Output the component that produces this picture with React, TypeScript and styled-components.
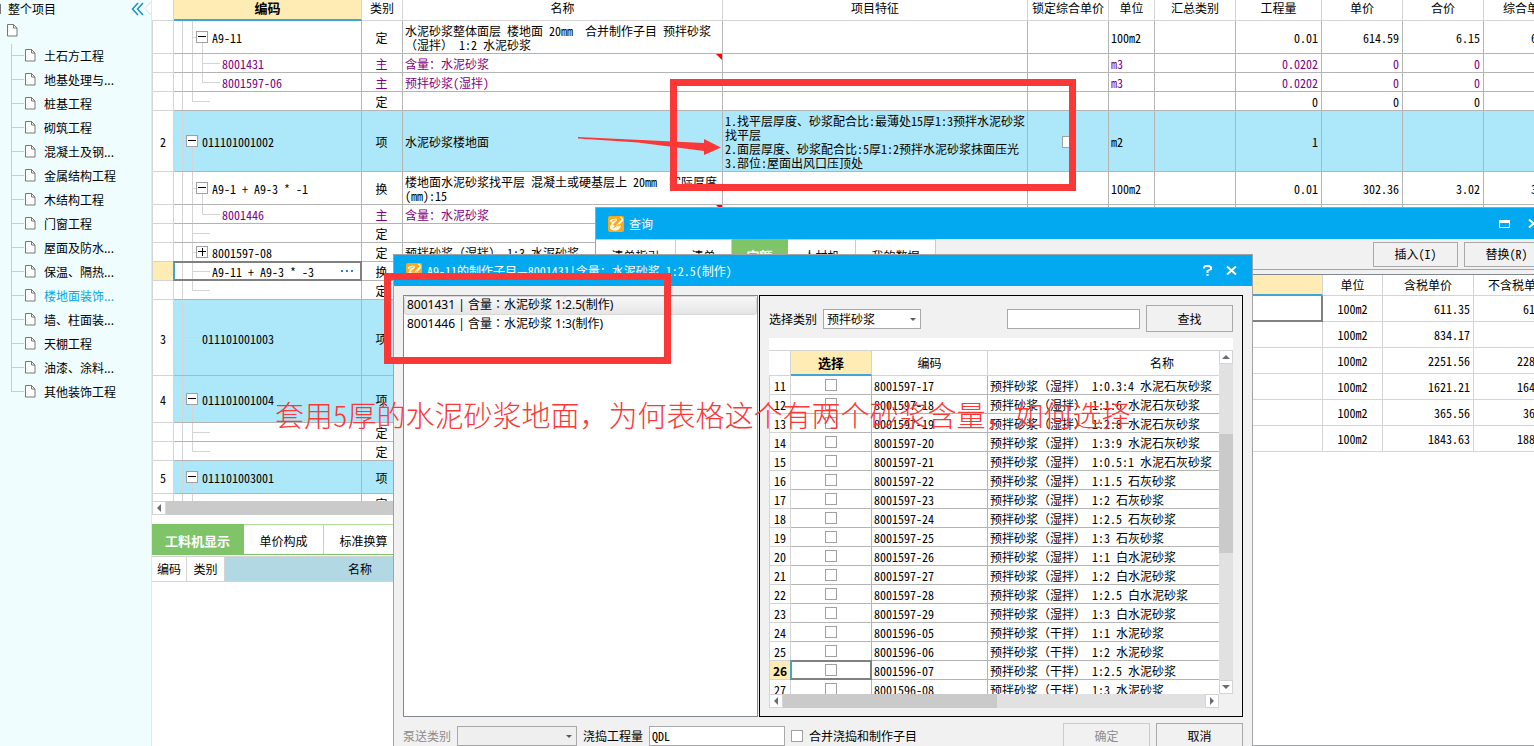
import React from "react";
import styled, { createGlobalStyle, css } from "styled-components";

const c = {
  line: "#b4b4b4",
  soft: "#d4d4d4",
  blue: "#02a9f1",
  row: "#ade8fa",
  head: "#ffecb4",
  accent: "#3fa5d3",
  green: "#80c46a",
  pale: "#b4e09c",
  panel: "#f1f1f1",
  purple: "#800080",
  red: "#fb3838",
};

const Global = createGlobalStyle`
  *, *::before, *::after { box-sizing: border-box; }
  html, body { margin: 0; padding: 0; background: #fff; }
  body, button, input, select {
    font-family: "Noto Sans CJK SC", "Liberation Sans", sans-serif;
    font-size: 12px;
    line-height: 14px;
    color: #000;
  }
  body { text-spacing-trim: space-all; }
  button, input, select { margin: 0; }
  table { border-collapse: separate; border-spacing: 0; table-layout: fixed; }
  td, th { padding: 0; font-weight: 400; }
`;

/* Latin letters and digits take half the width of an ideograph */
const mono = css`
  font-feature-settings: "hwid" 1;
`;

const FullWidth = styled.span`
  font-feature-settings: normal;
`;

/* keeps brackets and commas of the ideographic set at full width */
function wide(text?: string) {
  if (!text) return null;
  return text.split(/([（），])/).map((part, i) => (i % 2 ? <FullWidth key={i}>{part}</FullWidth> : part));
}

/* ---------- page frame ---------- */

const Page = styled.div`
  position: relative;
  display: flex;
  height: 100vh;
  overflow: hidden;
`;

const Sidebar = styled.nav`
  flex: 0 0 152px;
  background: #f0fdff;
  border-right: 1px solid #dcebee;
`;

const SideHead = styled.div`
  display: flex;
  align-items: center;
  height: 18px;
  gap: 5px;
`;

const SideMark = styled.span`
  width: 1px;
  height: 10px;
  background: #777;
`;

const SideTitle = styled.span`
  flex: 1;
  padding-left: 2px;
`;

const Collapse = styled.button`
  display: flex;
  border: 0;
  padding: 0;
  background: none;
`;

const RootRow = styled.div`
  display: flex;
  align-items: center;
  height: 26px;
  padding-left: 7px;
`;

const SideList = styled.ul`
  list-style: none;
  margin: 0;
  padding: 0 0 0 11px;
`;

const SideItem = styled.li`
  display: flex;
  height: 24px;
`;

const SideLink = styled.a<{ $active?: boolean }>`
  display: flex;
  align-items: center;
  gap: 8px;
  text-decoration: none;
  color: ${(p) => (p.$active ? "#0aa5e0" : "#000")};
`;

const Main = styled.main`
  flex: 1;
  min-width: 0;
  display: flex;
  flex-direction: column;
  ${mono}
`;

const GridArea = styled.div`
  flex: 1;
  min-height: 0;
  overflow: hidden;
`;

/* ---------- bill table ---------- */

const BillTable = styled.table`
  width: 1419px;
`;

const HeadCell = styled.th<{ $hot?: boolean }>`
  height: 21px;
  padding-bottom: 4px;
  text-align: center;
  white-space: nowrap;
  overflow: hidden;
  border-right: 1px solid ${c.soft};
  border-bottom: 1px solid ${c.soft};
  ${(p) =>
    p.$hot &&
    css`
      background: ${c.head};
      border-bottom: 2px solid ${c.accent};
      font-weight: 700;
      font-size: 13px;
    `}
`;

const BillRow = styled.tr<{ $h: number; $tone?: string }>`
  height: ${(p) => p.$h}px;
  color: ${(p) => (p.$tone === "sub" ? c.purple : "#000")};
  > td {
    height: ${(p) => p.$h}px;
    background: ${(p) => (p.$tone === "item" ? c.row : "#fff")};
  }
`;

const Cell = styled.td<{ $align?: string }>`
  position: relative;
  padding: 2px 3px 0 2px;
  text-align: ${(p) => p.$align ?? "left"};
  vertical-align: middle;
  white-space: pre;
  overflow: hidden;
  border-right: 1px solid ${c.line};
  border-bottom: 1px solid ${c.line};
`;

const NumCell = styled(Cell)<{ $hot?: boolean }>`
  && {
    background: ${(p) => (p.$hot ? c.head : "#fff")};
  }
  border-color: ${c.soft};
  border-left: 1px solid ${c.soft};
  text-align: center;
  padding: 2px 0 0;
`;

const CodeCell = styled(Cell)<{ $picked?: boolean }>`
  padding: 0;
  ${(p) =>
    p.$picked &&
    css`
      overflow: visible;
      &::after {
        content: "";
        position: absolute;
        inset: -1px;
        border: 2px solid #808080;
        border-left-color: ${c.accent};
        pointer-events: none;
      }
    `}
`;

const CodeInner = styled.div`
  display: flex;
  align-items: center;
`;

const CodeText = styled.span`
  flex: 1;
  padding-top: 2px;
`;

const More = styled.button`
  border: 0;
  background: none;
  display: flex;
  padding: 0 8px;
`;

const Note = styled.span`
  position: absolute;
  top: 0;
  right: 0;
  border-top: 6px solid #f00;
  border-left: 6px solid transparent;
`;

const Tick = styled.input.attrs({ type: "checkbox" })`
  appearance: none;
  display: block;
  margin: 0 auto;
  width: 12px;
  height: 12px;
  border: 1px solid #a0a0a0;
  background: #fff;
`;

type Level = 1 | 2 | 3;
type Mark = "minus" | "plus" | null;

interface Bill {
  h: number;
  num?: string;
  code?: string;
  level: Level;
  mark?: Mark;
  last?: boolean;
  kind?: string;
  name?: string;
  feature?: string;
  unit?: string;
  qty?: string;
  price?: string;
  total?: string;
  comp?: string;
  tone?: "item" | "sub";
  note?: boolean;
  picked?: boolean;
  tick?: boolean;
}

const bills: Bill[] = [
  { h: 33, code: "A9-11", level: 2, mark: "minus", kind: "定", name: "水泥砂浆整体面层 楼地面 20mm  合并制作子目 预拌砂浆\n（湿拌） 1:2 水泥砂浆", unit: "100m2", qty: "0.01", price: "614.59", total: "6.15", comp: "614.59" },
  { h: 19, code: "8001431", level: 3, kind: "主", name: "含量：水泥砂浆", unit: "m3", qty: "0.0202", price: "0", total: "0", tone: "sub", note: true },
  { h: 19, code: "8001597-06", level: 3, last: true, kind: "主", name: "预拌砂浆(湿拌)", unit: "m3", qty: "0.0202", price: "0", total: "0", tone: "sub" },
  { h: 19, level: 2, last: true, kind: "定", qty: "0", price: "0", total: "0" },
  { h: 61, num: "2", code: "011101001002", level: 1, mark: "minus", kind: "项", name: "水泥砂浆楼地面", feature: "1.找平层厚度、砂浆配合比:最薄处15厚1:3预拌水泥砂浆\n找平层\n2.面层厚度、砂浆配合比:5厚1:2预拌水泥砂浆抹面压光\n3.部位:屋面出风口压顶处", unit: "m2", qty: "1", tone: "item", tick: true },
  { h: 33, code: "A9-1 + A9-3 * -1", level: 2, mark: "minus", kind: "换", name: "楼地面水泥砂浆找平层 混凝土或硬基层上 20mm  实际厚度\n(mm):15", unit: "100m2", qty: "0.01", price: "302.36", total: "3.02", comp: "302.36" },
  { h: 19, code: "8001446", level: 3, last: true, kind: "主", name: "含量：水泥砂浆", tone: "sub", note: true },
  { h: 19, level: 2, kind: "定" },
  { h: 19, code: "8001597-08", level: 2, mark: "plus", kind: "定", name: "预拌砂浆（湿拌） 1:3 水泥砂浆" },
  { h: 19, code: "A9-11 + A9-3 * -3", level: 2, kind: "换", picked: true },
  { h: 19, level: 2, last: true, kind: "定" },
  { h: 76, num: "3", code: "011101001003", level: 1, kind: "项", tone: "item" },
  { h: 47, num: "4", code: "011101001004", level: 1, mark: "minus", kind: "项", tone: "item" },
  { h: 19, level: 2, kind: "定" },
  { h: 19, level: 2, last: true, kind: "定" },
  { h: 33, num: "5", code: "011101003001", level: 1, mark: "minus", kind: "项", tone: "item" },
  { h: 19, level: 2, kind: "定" },
];

const billWidths = [22, 188, 41, 320, 305, 81, 46, 81, 86, 81, 81, 87];
const billHeads = ["", "编码", "类别", "名称", "项目特征", "锁定综合单价", "单位", "汇总类别", "工程量", "单价", "合价", "综合单价"];

function Branch({ bill }: { bill: Bill }) {
  const { level, mark, last } = bill;
  const h = bill.h - 1;
  const mid = Math.floor(h / 2);
  const left = -2 + level * 10;
  const boxX = left + 4;
  const width = mark ? boxX + 16 : left + 20;
  const lines: number[][] = [[8, 0, 8, h]];
  if (level >= 2) lines.push([18, 0, 18, level === 2 && last ? mid : h]);
  if (level === 3) lines.push([28, 0, 28, last ? mid : h]);
  lines.push([left, mid, mark ? boxX : left + 18, mid]);
  if (mark === "minus") lines.push([left + 10, mid + 6, left + 10, h]);
  return (
    <svg width={width} height={h} viewBox={`0 0 ${width} ${h}`} shapeRendering="crispEdges" aria-hidden="true">
      {lines.map(([x1, y1, x2, y2], i) => (
        <rect key={i} x={x1} y={y1} width={x2 - x1 || 1} height={y2 - y1 || 1} fill={c.soft} />
      ))}
      {mark && (
        <g transform={`translate(${boxX} ${mid - 6})`}>
          <rect x="0.5" y="0.5" width="11" height="11" fill="#fff" stroke="#a0a0a0" />
          <rect x="2" y="5" width="8" height="1" fill="#000" />
          {mark === "plus" && <rect x="6" y="2" width="1" height="8" fill="#000" />}
        </g>
      )}
    </svg>
  );
}

function BillGrid() {
  return (
    <BillTable>
      <colgroup>
        {billWidths.map((w, i) => (
          <col key={i} width={w} />
        ))}
      </colgroup>
      <thead>
        <tr>
          {billHeads.map((t, i) => (
            <HeadCell key={i} $hot={i === 1}>
              {t}
            </HeadCell>
          ))}
        </tr>
      </thead>
      <tbody>
        {bills.map((b, i) => (
          <BillRow key={i} $h={b.h} $tone={b.tone}>
            <NumCell $hot={b.picked}>{b.num}</NumCell>
            <CodeCell $picked={b.picked}>
              <CodeInner>
                <Branch bill={b} />
                <CodeText>{b.code}</CodeText>
                {b.picked && (
                  <More aria-label="更多">
                    <svg width="12" height="3" viewBox="0 0 12 3" fill="#2f7fc8">
                      <path d="M0 0h2v2H0zM5 0h2v2H5zM10 0h2v2h-2z" />
                    </svg>
                  </More>
                )}
              </CodeInner>
            </CodeCell>
            <Cell $align="center">{b.kind}</Cell>
            <Cell>
              {wide(b.name)}
              {b.note && <Note />}
            </Cell>
            <Cell>{b.feature}</Cell>
            <Cell>{b.tick && <Tick aria-label="锁定综合单价" />}</Cell>
            <Cell>{b.unit}</Cell>
            <Cell />
            <Cell $align="right">{b.qty}</Cell>
            <Cell $align="right">{b.price}</Cell>
            <Cell $align="right">{b.total}</Cell>
            <Cell $align="right">{b.comp}</Cell>
          </BillRow>
        ))}
      </tbody>
    </BillTable>
  );
}

/* ---------- scroll bars ---------- */

const Bar = styled.div<{ $vertical?: boolean }>`
  display: flex;
  flex: 0 0 14px;
  flex-direction: ${(p) => (p.$vertical ? "column" : "row")};
  background: #e1e1e1;
`;

const BarButton = styled.button`
  display: flex;
  flex: 0 0 14px;
  align-items: center;
  justify-content: center;
  height: 14px;
  padding: 0;
  border: 1px solid ${c.soft};
  background: #fff;
`;

const Thumb = styled.div<{ $size: number }>`
  flex: ${(p) => p.$size} 0 0;
  background: #cacaca;
`;

const Space = styled.div<{ $size: number }>`
  flex: ${(p) => p.$size} 0 0;
`;

const arrows: Record<string, string> = {
  left: "M6 0v8L2 4z",
  right: "M2 0v8l4-4z",
  up: "M0 6h8L4 2z",
  down: "M0 2h8L4 6z",
};

function Arrow({ to }: { to: string }) {
  return (
    <BarButton aria-label={to} tabIndex={-1}>
      <svg width="8" height="8" viewBox="0 0 8 8" fill="#6b6b75">
        <path d={arrows[to]} />
      </svg>
    </BarButton>
  );
}

function ScrollBar({ vertical, before, size, after }: { vertical?: boolean; before: number; size: number; after: number }) {
  return (
    <Bar $vertical={vertical}>
      <Arrow to={vertical ? "up" : "left"} />
      <Space $size={before} />
      <Thumb $size={size} />
      <Space $size={after} />
      <Arrow to={vertical ? "down" : "right"} />
    </Bar>
  );
}

/* ---------- lower panel ---------- */

const Lower = styled.section`
  flex: 0 0 231px;
  padding-top: 9px;
`;

const Tabs = styled.div`
  display: flex;
  height: 31px;
  border-bottom: 1px solid ${c.green};
`;

const Tab = styled.button<{ $on?: boolean; $w: number }>`
  width: ${(p) => p.$w}px;
  padding: 2px 0 0;
  border: 0;
  border-top: 1px solid ${c.pale};
  border-right: 1px solid ${c.pale};
  background: #fff;
  ${mono}
  ${(p) =>
    p.$on &&
    css`
      background: ${c.green};
      border-color: ${c.green};
      color: #fff;
      font-weight: 700;
      font-size: 13px;
    `}
`;

const LowerTable = styled.table`
  width: 344px;
  margin-top: 1px;
`;

const LowerHead = styled.th<{ $wide?: boolean }>`
  height: 26px;
  text-align: center;
  border: 1px solid ${c.soft};
  border-left: 0;
  background: ${(p) => (p.$wide ? "#b2d8e3" : "#fff")};
`;

/* ---------- windows ---------- */

const Window = styled.section`
  position: absolute;
  display: flex;
  flex-direction: column;
  border: 1px solid #9fa3a6;
  background: ${c.panel};
  ${mono}
`;

const QueryWindow = styled(Window)`
  top: 207px;
  left: 595px;
  right: -30px;
  bottom: 0;
`;

const MixDialog = styled(Window)`
  top: 254px;
  left: 393px;
  width: 860px;
  bottom: -10px;
`;

const TitleBar = styled.header`
  flex: 0 0 31px;
  display: flex;
  align-items: center;
  gap: 5px;
  padding-left: 12px;
  background: ${c.blue};
  color: #fff;
`;

const Title = styled.h2`
  flex: 1;
  margin: 0;
  font-size: 12px;
  font-weight: 400;
`;

const TitleActions = styled.div<{ $gap: number; $end: number }>`
  display: flex;
  align-items: center;
  gap: ${(p) => p.$gap}px;
  padding-right: ${(p) => p.$end}px;
`;

const TitleButton = styled.button`
  display: flex;
  border: 0;
  padding: 0;
  background: none;
  color: #fff;
`;

const QueryTools = styled.div`
  display: flex;
  flex: 0 0 31px;
  align-items: center;
  gap: 6px;
  padding-right: 14px;
  border-bottom: 1px solid ${c.green};
`;

const QueryTabs = styled.div`
  display: flex;
  flex: 1;
  height: 30px;
`;

const Push = styled.button<{ $w: number; $h: number }>`
  width: ${(p) => p.$w}px;
  height: ${(p) => p.$h}px;
  padding: 0;
  border: 1px solid #a9a9a9;
  background: ${c.panel};
  ${mono}
  &:disabled {
    color: #8c8c8c;
    border-color: #cbcbcb;
  }
`;

const QueryBody = styled.div`
  flex: 1;
  margin-top: 4px;
  border-top: 1px solid #828790;
  background: #fff;
`;

const PriceTable = styled.table`
  width: 100%;
`;

const PriceHead = styled(HeadCell)`
  padding: 0;
`;

const PriceCell = styled.td<{ $align?: string; $picked?: boolean }>`
  height: 26px;
  padding: 0 3px;
  text-align: ${(p) => p.$align ?? "right"};
  border-right: 1px solid ${c.soft};
  border-bottom: 1px solid ${c.soft};
  ${(p) => p.$picked && "border-right: 2px solid #808080; border-bottom: 2px solid #808080;"}
`;

const prices = [
  ["611.35", "613.27"],
  ["834.17", ""],
  ["2251.56", "2284.10"],
  ["1621.21", "1645.32"],
  ["365.56", "366.81"],
  ["1843.63", "1885.47"],
];

const DialogBody = styled.div`
  flex: 1;
  min-height: 0;
  display: flex;
  gap: 1px;
  padding: 9px 9px 0;
`;

const Choices = styled.ul`
  flex: 1;
  min-width: 0;
  margin: 0;
  padding: 0;
  list-style: none;
  border: 1px solid #828790;
  background: #fff;
  font-family: "Noto Sans", "Noto Sans CJK TC", "Noto Sans CJK SC", sans-serif;
  font-feature-settings: normal;
`;

const Choice = styled.li<{ $on?: boolean }>`
  height: 19px;
  padding: 0 2px;
  line-height: 16px;
  border: 1px solid transparent;
  ${(p) =>
    p.$on &&
    css`
      border-color: #d9d9d9;
      border-radius: 3px;
      background: linear-gradient(#f8f8f8, #e5e5e5);
    `}
`;

const Picker = styled.div`
  flex: 0 0 484px;
  display: flex;
  flex-direction: column;
  min-width: 0;
  padding: 9px 9px 8px;
  border: 1px solid #000;
`;

const Filter = styled.div`
  display: flex;
  flex: 0 0 27px;
  align-items: center;
  gap: 6px;
`;

const Grow = styled.span`
  flex: 1;
`;

const Drop = styled.span<{ $w: number }>`
  position: relative;
  width: ${(p) => p.$w}px;
  height: 20px;
  select {
    appearance: none;
    display: block;
    width: 100%;
    height: 20px;
    padding: 0 3px;
    border: 1px solid #a9a9a9;
    border-radius: 0;
    background: #fff;
    opacity: 1;
  }
  select:disabled {
    background: #efefef;
  }
  &::after {
    content: "";
    position: absolute;
    right: 5px;
    top: 9px;
    border: 3px solid transparent;
    border-top-color: #555b66;
    border-bottom: 0;
  }
`;

const Field = styled.input<{ $w: number }>`
  width: ${(p) => p.$w}px;
  height: 20px;
  padding: 0 2px 2px;
  border: 1px solid #a9a9a9;
  background: #fff;
  ${mono}
`;

const MixArea = styled.div`
  flex: 1;
  min-height: 0;
  display: flex;
  flex-direction: column;
  margin-top: 6px;
  border-top: 12px solid #fff;
`;

const MixTop = styled.div`
  flex: 1;
  min-height: 0;
  display: flex;
`;

const MixClip = styled.div`
  flex: 1;
  min-width: 0;
  overflow: hidden;
  background: #fff;
`;

const MixBottom = styled.div`
  flex: 0 0 14px;
  display: flex;
  flex-direction: column;
  padding-right: 14px;
`;

const MixTable = styled.table`
  width: 568px;
`;

const MixHead = styled(HeadCell)`
  height: 26px;
  padding: 0;
  border-top: 1px solid ${c.soft};
`;

const MixRow = styled.tr<{ $on?: boolean }>`
  height: 19px;
  ${(p) =>
    p.$on &&
    css`
      ${NumCell} {
        font-weight: 700;
        font-size: 12px;
        font-feature-settings: normal;
      }
    `}
`;

const mixes: [string, string][] = [
  ["8001597-17", "预拌砂浆（湿拌） 1:0.3:4 水泥石灰砂浆"],
  ["8001597-18", "预拌砂浆（湿拌） 1:1:6 水泥石灰砂浆"],
  ["8001597-19", "预拌砂浆（湿拌） 1:2:8 水泥石灰砂浆"],
  ["8001597-20", "预拌砂浆（湿拌） 1:3:9 水泥石灰砂浆"],
  ["8001597-21", "预拌砂浆（湿拌） 1:0.5:1 水泥石灰砂浆"],
  ["8001597-22", "预拌砂浆（湿拌） 1:1.5 石灰砂浆"],
  ["8001597-23", "预拌砂浆（湿拌） 1:2 石灰砂浆"],
  ["8001597-24", "预拌砂浆（湿拌） 1:2.5 石灰砂浆"],
  ["8001597-25", "预拌砂浆（湿拌） 1:3 石灰砂浆"],
  ["8001597-26", "预拌砂浆（湿拌） 1:1 白水泥砂浆"],
  ["8001597-27", "预拌砂浆（湿拌） 1:2 白水泥砂浆"],
  ["8001597-28", "预拌砂浆（湿拌） 1:2.5 白水泥砂浆"],
  ["8001597-29", "预拌砂浆（湿拌） 1:3 白水泥砂浆"],
  ["8001596-05", "预拌砂浆（干拌） 1:1 水泥砂浆"],
  ["8001596-06", "预拌砂浆（干拌） 1:2 水泥砂浆"],
  ["8001596-07", "预拌砂浆（干拌） 1:2.5 水泥砂浆"],
  ["8001596-08", "预拌砂浆（干拌） 1:3 水泥砂浆"],
];

const Footer = styled.footer`
  flex: 0 0 38px;
  display: flex;
  align-items: center;
  gap: 6px;
  padding: 0 9px;
`;

const Faded = styled.label`
  color: #8c8c8c;
`;

const TickLabel = styled.label`
  flex: 1;
  display: flex;
  align-items: center;
  gap: 6px;
  ${Tick} {
    margin: 0;
  }
`;

/* ---------- annotations drawn over the screen ---------- */

const Frame = styled.div<{ $x: number; $y: number; $w: number; $h: number }>`
  position: absolute;
  left: ${(p) => p.$x}px;
  top: ${(p) => p.$y}px;
  width: ${(p) => p.$w}px;
  height: ${(p) => p.$h}px;
  border: 7px solid ${c.red};
  pointer-events: none;
`;

const Pointer = styled.svg`
  position: absolute;
  left: 578px;
  top: 136px;
  pointer-events: none;
`;

const Remark = styled.p`
  position: absolute;
  left: 275px;
  top: 397px;
  margin: 0;
  font-size: 29px;
  font-weight: 300;
  line-height: 34px;
  white-space: nowrap;
  color: ${c.red};
  pointer-events: none;
  ${mono}
`;

/* ---------- drawings ---------- */

function DocIcon() {
  return (
    <svg width="11" height="14" viewBox="0 0 11 14" fill="#fff" stroke="#777" aria-hidden="true">
      <path d="M0.5 0.5h6l3.5 3.5v8h-9.5z" />
      <path d="M6.5 0.5v3.5h3.5" fill="none" />
    </svg>
  );
}

function Logo() {
  return (
    <svg width="16" height="16" viewBox="0 0 16 16" aria-hidden="true">
      <rect width="16" height="16" rx="2" fill="#f9a91a" />
      <path d="M1.5 5C3 2.500 6 3 8.500 2.500L9 4.500 5 8.500l2 2L14 3l1.500 1.500-6 6L13 9.500c-0.500 3-3 5-6 5-3.500 0-5.500-1.500-5-4.500L4 7z" fill="#fff6e0" />
      <path d="M3.500 5.500l4-1.500M5 12l6-3.500" stroke="#f9a91a" fill="none" />
      <path d="M12.500 1l2.500 2.500" stroke="#fff6e0" strokeWidth="1.500" />
    </svg>
  );
}

function CloseIcon() {
  return (
    <svg width="11" height="9" viewBox="0 0 11 9" stroke="#fff" strokeWidth="2" aria-hidden="true">
      <path d="M1 0.5l9 8M10 0.5l-9 8" />
    </svg>
  );
}

const works = ["土石方工程", "地基处理与...", "桩基工程", "砌筑工程", "混凝土及钢...", "金属结构工程", "木结构工程", "门窗工程", "屋面及防水...", "保温、隔热...", "楼地面装饰...", "墙、柱面装...", "天棚工程", "油漆、涂料...", "其他装饰工程"];

export default function App() {
  return (
    <Page>
      <Global />
      <Sidebar>
        <SideHead>
          <SideMark />
          <SideTitle>整个项目</SideTitle>
          <Collapse aria-label="收起">
            <svg width="20" height="18" viewBox="0 0 20 18" fill="none">
              <path d="M20 2l-6 6.500 6 6.500" fill="#fff" stroke="#d4dfe2" />
              <path d="M7 3L1.500 9 7 15M12 3L6.500 9 12 15" stroke="#1592c0" strokeWidth="1.500" />
            </svg>
          </Collapse>
        </SideHead>
        <RootRow>
          <DocIcon />
        </RootRow>
        <SideList>
          {works.map((w, i) => (
            <SideItem key={w}>
              <svg width="14" height="24" viewBox="0 0 14 24" fill="#c4cdcf" aria-hidden="true">
                <rect width="1" height={i === works.length - 1 ? 12 : 24} />
                <rect y="11" width="13" height="1" />
              </svg>
              <SideLink href="#" $active={i === 10}>
                <DocIcon />
                {w}
              </SideLink>
            </SideItem>
          ))}
        </SideList>
      </Sidebar>

      <Main>
        <GridArea>
          <BillGrid />
        </GridArea>
        <ScrollBar before={0} size={900} after={450} />
        <Lower>
          <Tabs>
            <Tab $on $w={92}>工料机显示</Tab>
            <Tab $w={80}>单价构成</Tab>
            <Tab $w={80}>标准换算</Tab>
          </Tabs>
          <LowerTable>
            <colgroup>
              <col width="35" />
              <col width="38" />
              <col width="271" />
            </colgroup>
            <thead>
              <tr>
                <LowerHead>编码</LowerHead>
                <LowerHead>类别</LowerHead>
                <LowerHead $wide>名称</LowerHead>
              </tr>
            </thead>
          </LowerTable>
        </Lower>
      </Main>

      <QueryWindow aria-label="查询">
        <TitleBar>
          <Logo />
          <Title>查询</Title>
          <TitleActions $gap={18} $end={24}>
            <TitleButton aria-label="最大化">
              <svg width="11" height="8" viewBox="0 0 11 8" fill="none" stroke="#fff">
                <path d="M0.5 0.5h10v7h-10z" />
                <path d="M0 1.5h11" strokeWidth="3" />
              </svg>
            </TitleButton>
            <TitleButton aria-label="关闭">
              <CloseIcon />
            </TitleButton>
          </TitleActions>
        </TitleBar>
        <QueryTools>
          <QueryTabs>
            <Tab $w={80}>清单指引</Tab>
            <Tab $w={56}>清单</Tab>
            <Tab $on $w={56}>定额</Tab>
            <Tab $w={68}>人材机</Tab>
            <Tab $w={80}>我的数据</Tab>
          </QueryTabs>
          <Push $w={85} $h={25}>插入(I)</Push>
          <Push $w={85} $h={25}>替换(R)</Push>
        </QueryTools>
        <QueryBody>
          <PriceTable>
            <colgroup>
              <col />
              <col width="60" />
              <col width="91" />
              <col width="89" />
            </colgroup>
            <thead>
              <tr>
                <PriceHead $hot />
                <PriceHead>单位</PriceHead>
                <PriceHead>含税单价</PriceHead>
                <PriceHead>不含税单价</PriceHead>
              </tr>
            </thead>
            <tbody>
              {prices.map(([a, b], i) => (
                <tr key={a}>
                  <PriceCell $picked={i === 0} />
                  <PriceCell $align="center">100m2</PriceCell>
                  <PriceCell>{a}</PriceCell>
                  <PriceCell>{b}</PriceCell>
                </tr>
              ))}
            </tbody>
          </PriceTable>
        </QueryBody>
      </QueryWindow>

      <MixDialog role="dialog" aria-label="制作子目">
        <TitleBar>
          <Logo />
          <Title>A9-11的制作子目—8001431|含量：水泥砂浆 1:2.5(制作)</Title>
          <TitleActions $gap={14} $end={15}>
            <TitleButton aria-label="帮助">
              <svg width="9" height="11" viewBox="0 0 9 11" fill="none" stroke="#fff" strokeWidth="2">
                <path d="M1 3.500V2.500L2.500 1h4L8 2.500v1.500L4.500 6v2M4.500 9v2" />
              </svg>
            </TitleButton>
            <TitleButton aria-label="关闭">
              <CloseIcon />
            </TitleButton>
          </TitleActions>
        </TitleBar>
        <DialogBody>
          <Choices>
            <Choice $on>8001431 | 含量：水泥砂浆 1:2.5(制作)</Choice>
            <Choice>8001446 | 含量：水泥砂浆 1:3(制作)</Choice>
          </Choices>
          <Picker>
            <Filter>
              <label htmlFor="kind">选择类别</label>
              <Drop $w={98}>
                <select id="kind" defaultValue="预拌砂浆">
                  <option>预拌砂浆</option>
                </select>
              </Drop>
              <Grow />
              <Field $w={133} aria-label="查找内容" />
              <Push $w={87} $h={27}>查找</Push>
            </Filter>
            <MixArea>
              <MixTop>
                <MixClip>
                  <MixTable>
                    <colgroup>
                      <col width="22" />
                      <col width="81" />
                      <col width="116" />
                      <col width="349" />
                    </colgroup>
                    <thead>
                      <tr>
                        <MixHead />
                        <MixHead $hot>选择</MixHead>
                        <MixHead>编码</MixHead>
                        <MixHead>名称</MixHead>
                      </tr>
                    </thead>
                    <tbody>
                      {mixes.map(([code, name], i) => (
                        <MixRow key={code} $on={i === 15}>
                          <NumCell $hot={i === 15}>{i + 11}</NumCell>
                          <CodeCell $picked={i === 15}>
                            <Tick aria-label={code} />
                          </CodeCell>
                          <Cell>{code}</Cell>
                          <Cell>{wide(name)}</Cell>
                        </MixRow>
                      ))}
                    </tbody>
                  </MixTable>
                </MixClip>
                <ScrollBar vertical before={70} size={118} after={127} />
              </MixTop>
              <MixBottom>
                <ScrollBar before={0} size={214} after={208} />
              </MixBottom>
            </MixArea>
          </Picker>
        </DialogBody>
        <Footer>
          <Faded htmlFor="pump">泵送类别</Faded>
          <Drop $w={120}>
            <select id="pump" disabled />
          </Drop>
          <label htmlFor="pour">浇捣工程量</label>
          <Field id="pour" $w={136} defaultValue="QDL" />
          <TickLabel>
            <Tick />
            合并浇捣和制作子目
          </TickLabel>
          <Push $w={87} $h={27} disabled>确定</Push>
          <Push $w={87} $h={27}>取消</Push>
        </Footer>
      </MixDialog>

      <Frame $x={670} $y={79} $w={406} $h={112} />
      <Frame $x={384} $y={273} $w={287} $h={91} />
      <Pointer width="144" height="20" viewBox="0 0 144 20" fill={c.red}>
        <path d="M0 1L126 7V3l17 8.500L126 19v-4L60 6.500 0 2.500z" />
      </Pointer>
      <Remark>{wide("套用5厚的水泥砂浆地面，为何表格这个有两个砂浆含量，如何选择")}</Remark>
    </Page>
  );
}
